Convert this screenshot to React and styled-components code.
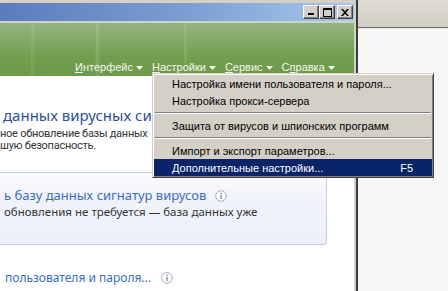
import React from 'react';
import styled, { createGlobalStyle } from 'styled-components';

const Global = createGlobalStyle`
  html, body { margin: 0; padding: 0; width: 448px; height: 291px; overflow: hidden; background: #f7f7f7; }
  #root { width: 448px; height: 291px; }
`;

const Screen = styled.div`
  position: relative;
  display: flex;
  width: 448px;
  height: 291px;
  overflow: hidden;
`;

const Frame = styled.div`
  flex: none;
  display: flex;
  border-right: 2px solid #3c3c3c;
`;

const Window = styled.div`
  width: 354px;
  display: flex;
  flex-direction: column;
  padding-top: 3px;
  background: #d4d0c8;
  border-right: 2px solid #d4d0c8;
`;

const TitleBar = styled.div`
  height: 18px;
  display: flex;
  align-items: center;
  justify-content: flex-end;
  padding-right: 1px;
  background: linear-gradient(to right, #5a7cbd 0%, #7e9fd3 55%, #a8c8ee 100%);
`;

const WinButton = styled.div`
  box-sizing: border-box;
  width: 16px;
  height: 14px;
  margin-left: ${p => (p.$gap ? '2px' : '0')};
  background: #d4d0c8;
  border: 1px solid;
  border-color: #fff #404040 #404040 #fff;
  box-shadow: inset -1px -1px 0 #808080;
  display: flex;
  align-items: center;
  justify-content: center;
  svg { display: block; }
`;

const Divider = styled.div`
  height: 2px;
  background: #cdd3c6;
`;

const Banner = styled.div`
  height: 51px;
  display: flex;
  align-items: flex-end;
  padding: 0 0 2px 75px;
  gap: 9px;
  background:
    linear-gradient(to right, transparent 0, transparent 30px, rgba(255,255,255,0.10) 32px, transparent 36px, transparent 95px, rgba(255,255,255,0.16) 97px, transparent 100px, transparent 183px, rgba(255,255,255,0.12) 185px, transparent 188px, transparent 100%),
    linear-gradient(to bottom, #94b47f 0%, #84aa69 30%, #73a050 60%, #6b9a49 100%);
`;

const MenuLink = styled.div`
  display: flex;
  align-items: center;
  gap: 3px;
  font-family: "Liberation Sans", Arial, sans-serif;
  font-size: 11px;
  line-height: 13px;
  color: #f4f7f0;
  u { text-decoration: underline; text-underline-offset: 1px; }
`;

const Content = styled.div`
  flex: 1;
  background: #fff;
  display: flex;
  flex-direction: column;
  padding-top: 29px;
  font-family: "Noto Sans", "Open Sans", sans-serif;
`;

const Heading = styled.div`
  padding-left: 3px;
  font-size: 15px;
  line-height: 20px;
  color: #2d4f9e;
  white-space: nowrap;
`;

const Body = styled.div`
  margin-top: 3px;
  display: flex;
  flex-direction: column;
  font-family: Roboto, "Noto Sans", sans-serif;
  font-size: 11px;
  letter-spacing: -0.25px;
  line-height: 12px;
  color: #333;
  white-space: nowrap;
`;

const Card = styled.div`
  box-sizing: border-box;
  margin: 20px 0 0 -6px;
  width: 333px;
  height: 73px;
  border: 1px solid #c3cee4;
  border-radius: 3px;
  background: linear-gradient(to bottom, #fbfcfe 0%, #f0f3fa 40%, #ecf0f9 100%);
  padding: 14px 0 0 9px;
`;

const Row = styled.div`
  display: flex;
  align-items: center;
  gap: ${p => p.$gap || 10}px;
  padding-left: ${p => p.$pad || 0}px;
  margin-top: ${p => p.$top || 0}px;
`;

const CardTitle = styled.div`
  font-size: 13px;
  line-height: 17px;
  color: #3a6cc9;
  white-space: nowrap;
`;

const CardText = styled.div`
  font-size: 11.5px;
  line-height: 15px;
  color: #333;
  white-space: nowrap;
`;

const LinkText = styled.div`
  font-size: 12px;
  line-height: 16px;
  color: #3a6cc9;
  white-space: nowrap;
`;

const Side = styled.div`
  flex: 1;
  display: flex;
  flex-direction: column;
`;

const SideTop = styled.div`
  height: 27px;
  background: linear-gradient(to bottom, #dedbd5, #d2cec7);
  border-bottom: 1px solid #6e6e6e;
`;

const SideFill = styled.div`
  flex: 1;
  background: #f7f7f7;
  border-top: 1px solid #e8e8e8;
`;

const Menu = styled.div`
  position: absolute;
  left: 152px;
  top: 73px;
  width: 282px;
  box-sizing: border-box;
  padding: 1px 0;
  background: #d4d0c8;
  border: 1px solid;
  border-color: #d4d0c8 #404040 #404040 #d4d0c8;
  box-shadow: inset 1px 1px 0 #fff, inset -1px -1px 0 #808080;
  font-family: "Liberation Sans", Arial, sans-serif;
  font-size: 11px;
  color: #000;
`;

const MenuItem = styled.div`
  height: 17px;
  margin: 0 1px;
  display: flex;
  align-items: center;
  justify-content: space-between;
  padding: 0 19px 0 18px;
  background: ${p => (p.$active ? '#0a246a' : 'transparent')};
  color: ${p => (p.$active ? '#fff' : '#000')};
  white-space: nowrap;
`;

const Separator = styled.div`
  height: 8px;
  display: flex;
  align-items: center;
  padding: 0 2px;
  &::before {
    content: '';
    flex: 1;
    height: 1px;
    border-bottom: 1px solid #fff;
    background: #808080;
  }
`;

const Arrow = () => (
  <svg width="7" height="4" viewBox="0 0 7 4"><path d="M0 0h7L3.5 4z" fill="#f4f7f0" /></svg>
);

const Info = () => (
  <svg width="12" height="12" viewBox="0 0 12 12">
    <circle cx="6" cy="6" r="5.3" fill="#fff" stroke="#a7adb8" strokeWidth="1" />
    <rect x="5.3" y="5" width="1.5" height="4" fill="#8d95a3" />
    <rect x="5.3" y="2.8" width="1.5" height="1.4" fill="#8d95a3" />
  </svg>
);

export default function App() {
  return (
    <>
      <Global />
      <Screen>
        <Frame>
          <Window>
            <TitleBar>
              <WinButton>
                <svg width="8" height="8" viewBox="0 0 8 8"><rect x="1" y="5" width="6" height="2" fill="#000" /></svg>
              </WinButton>
              <WinButton>
                <svg width="9" height="9" viewBox="0 0 9 9"><path d="M0 0h9v9H0z M1 2v6h7V2z" fill="#000" fillRule="evenodd" /></svg>
              </WinButton>
              <WinButton $gap>
                <svg width="8" height="7" viewBox="0 0 8 7"><path d="M0 0h2l2 2.2L6 0h2L5 3.5 8 7H6L4 4.8 2 7H0l3-3.5z" fill="#000" /></svg>
              </WinButton>
            </TitleBar>
            <Divider />
            <Banner>
              <MenuLink><span><u>И</u>нтерфейс</span><Arrow /></MenuLink>
              <MenuLink><span><u>Н</u>астройки</span><Arrow /></MenuLink>
              <MenuLink><span><u>С</u>ервис</span><Arrow /></MenuLink>
              <MenuLink><span>С<u>п</u>равка</span><Arrow /></MenuLink>
            </Banner>
            <Content>
              <Heading>данных вирусных сиг</Heading>
              <Body>
                <span>ное обновление базы данных</span>
                <span>шую безопасность.</span>
              </Body>
              <Card>
                <Row $gap={9}>
                  <CardTitle>ь базу данных сигнатур вирусов</CardTitle>
                  <Info />
                </Row>
                <CardText>обновления не требуется — база данных уже</CardText>
              </Card>
              <Row $gap={10} $pad={5} $top={25}>
                <LinkText>пользователя и пароля...</LinkText>
                <Info />
              </Row>
            </Content>
          </Window>
        </Frame>
        <Side>
          <SideTop />
          <SideFill />
        </Side>
        <Menu>
          <MenuItem>Настройка имени пользователя и пароля...</MenuItem>
          <MenuItem>Настройка прокси-сервера</MenuItem>
          <Separator />
          <MenuItem>Защита от вирусов и шпионских программ</MenuItem>
          <Separator />
          <MenuItem>Импорт и экспорт параметров...</MenuItem>
          <MenuItem $active><span>Дополнительные настройки...</span><span>F5</span></MenuItem>
        </Menu>
      </Screen>
    </>
  );
}
